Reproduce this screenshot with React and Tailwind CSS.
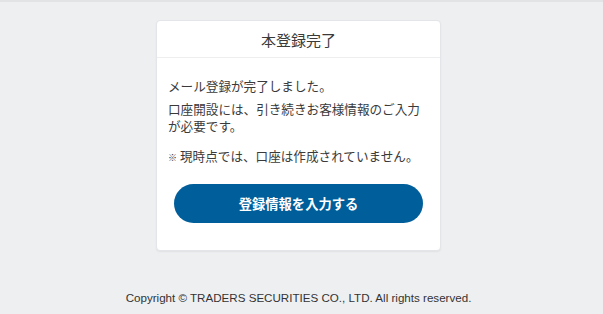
import React from 'react';

const jp = { fontFamily: '"Noto Sans CJK JP", "Noto Sans", sans-serif' };

const CompleteCard = () => (
  <div className="w-[285px] rounded-[4px] bg-white border border-[#e3e5e8] shadow-[0_1px_2px_rgba(0,0,0,0.06)]">
    <div className="h-[37px] flex items-center justify-center border-b border-[#eceef0]">
      <h1 className="text-[15px] text-[#3a3a3a] leading-none">本登録完了</h1>
    </div>
    <div className="px-[11px] pt-[19px] pb-[27px] text-[12.6px] leading-[17px] text-[#3a3a3a]">
      <p>メール登録が完了しました。</p>
      <p className="mt-[6px]">口座開設には、引き続きお客様情報のご入力が必要です。</p>
      <p className="mt-[13px]">
        <span className="text-[9px] mr-[3px]">※</span>現時点では、口座は作成されていません。
      </p>
      <button className="mt-[18px] mx-auto flex items-center justify-center w-[249px] h-[39px] rounded-full bg-[#005e9a] text-white text-[13.3px] font-bold">
        登録情報を入力する
      </button>
    </div>
  </div>
);

export default function App() {
  return (
    <div className="min-h-[314px] bg-[#eeeff1] border-t-2 border-[#e2e3e5] pr-[6px]" style={jp}>
      <div className="flex justify-center pt-[18px]">
        <CompleteCard />
      </div>
      <footer
        className="pt-[38px] text-center text-[11.6px] text-[#333]"
        style={{ fontFamily: '"Liberation Sans", Arial, sans-serif' }}
      >
        Copyright © TRADERS SECURITIES CO., LTD. All rights reserved.
      </footer>
    </div>
  );
}
